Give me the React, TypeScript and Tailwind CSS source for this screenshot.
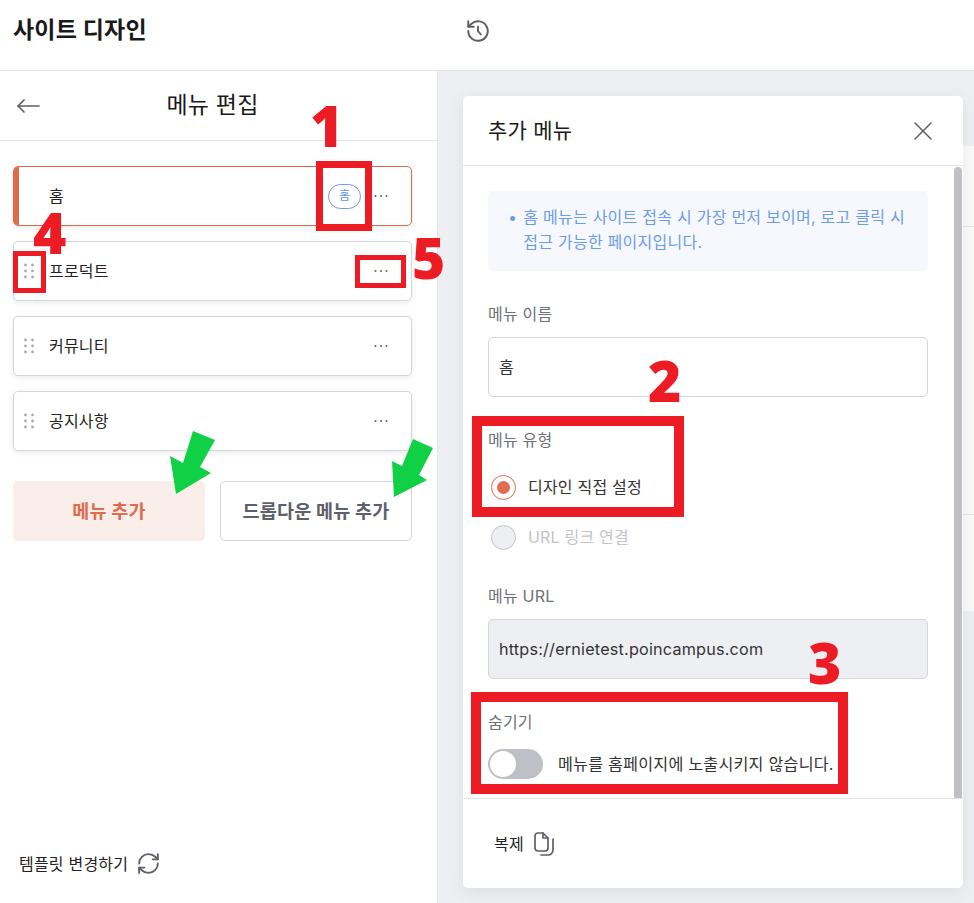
import React from 'react';
import { RefreshCw } from 'lucide-react';

function Dots() {
  return (
    <svg width="10" height="16" viewBox="0 0 10 16" fill="#a9abb3">
      <circle cx="1.5" cy="2" r="1.4" />
      <circle cx="8.5" cy="2" r="1.4" />
      <circle cx="1.5" cy="8" r="1.4" />
      <circle cx="8.5" cy="8" r="1.4" />
      <circle cx="1.5" cy="14" r="1.4" />
      <circle cx="8.5" cy="14" r="1.4" />
    </svg>
  );
}

function More() {
  return (
    <svg width="14" height="4" viewBox="0 0 14 4" fill="#5d6068">
      <circle cx="1.5" cy="2" r="1" />
      <circle cx="7" cy="2" r="1" />
      <circle cx="12.5" cy="2" r="1" />
    </svg>
  );
}

function MenuItem({ label }: { label: string }) {
  return (
    <div className="flex h-[60px] items-center rounded-[5px] border border-[#d5d6da] bg-white pr-[23px] shadow-[0_2px_6px_rgba(0,0,0,0.08)]">
      <div className="flex w-[35px] pl-[10px]">
        <Dots />
      </div>
      <span className="text-[16px] text-[#222222]">{label}</span>
      <div className="ml-auto">
        <More />
      </div>
    </div>
  );
}

// red annotation boxes and numbers sit on top of the screenshot
function Box({ className }: { className: string }) {
  return <div className={`pointer-events-none absolute border-[#ed1c24] ${className}`} />;
}

function Num({ className, children }: { className: string; children: React.ReactNode }) {
  return (
    <div className={`pointer-events-none absolute h-[44px] font-['Noto_Sans',sans-serif] text-[57px] leading-[44px] font-black tracking-normal text-[#ed1c24] ${className}`}>
      {children}
    </div>
  );
}

function GreenArrow({ className, w, h, d }: { className: string; w: number; h: number; d: string }) {
  return (
    <svg className={`pointer-events-none absolute ${className}`} width={w} height={h} viewBox={`0 0 ${w} ${h}`} fill="#10d145">
      <path d={d} />
    </svg>
  );
}

export default function App() {
  return (
    <div className="relative flex h-[903px] w-[974px] flex-col overflow-hidden bg-white font-['Inter','Noto_Sans_CJK_KR',sans-serif] tracking-[0.2px]">
      <header className="flex h-[71px] shrink-0 items-center border-b border-[#e3e4e8] pb-[10px]">
        <h1 className="w-[465px] pl-[13px] text-[23px] font-bold text-[#1a1a1a]">사이트 디자인</h1>
        <svg className="mt-[2px]" width="26" height="26" viewBox="0 0 24 24" fill="none" stroke="#5d6068" strokeWidth="1.8" strokeLinecap="round" strokeLinejoin="round">
          <path d="M3 12a9 9 0 1 0 3-6.7L3 8" />
          <path d="M3 3v5h5" />
          <path d="M12 8v4l2.5 3" />
        </svg>
      </header>

      <div className="flex min-h-0 flex-1">
        <aside className="flex w-[438px] shrink-0 flex-col border-r border-[#e3e4e8]">
          <div className="relative flex h-[70px] shrink-0 items-center justify-center border-b border-[#e3e4e8] pr-[12px]">
            <svg className="absolute top-[28px] left-[16px]" width="24" height="14" viewBox="0 0 24 14" fill="none" stroke="#5d6068" strokeWidth="1.7" strokeLinecap="round" strokeLinejoin="round">
              <path d="M23 7H2" />
              <path d="M8 1L2 7l6 6" />
            </svg>
            <h2 className="text-[23px] font-normal text-[#1a1a1a]">메뉴 편집</h2>
          </div>

          <div className="flex flex-col gap-[15px] pt-[25px] pr-[25px] pl-[13px]">
            <div className="flex h-[60px] items-center overflow-hidden rounded-[5px] border border-[#e0684b] bg-white pr-[23px] shadow-[0_2px_6px_rgba(0,0,0,0.08)]">
              <div className="h-full w-[5px] bg-[#df6c4f]" />
              <span className="ml-[30px] text-[16px] text-[#222222]">홈</span>
              <span className="mr-[13px] ml-auto flex h-[25px] w-[33px] items-center justify-center rounded-full border border-[#6d9be8] text-[12px] text-[#5b8fe6]">홈</span>
              <More />
            </div>
            <MenuItem label="프로덕트" />
            <MenuItem label="커뮤니티" />
            <MenuItem label="공지사항" />
          </div>

          <div className="flex gap-[15px] pt-[30px] pr-[25px] pl-[13px]">
            <button className="h-[60px] w-[192px] rounded-[5px] bg-[#faeeeb] pt-[2px] text-[18.5px] font-bold text-[#df6c4f]">메뉴 추가</button>
            <button className="h-[60px] w-[192px] rounded-[5px] border border-[#d5d6da] bg-white pt-[2px] text-[18.5px] font-bold text-[#5d6068]">드롭다운 메뉴 추가</button>
          </div>

          <div className="mt-auto flex items-center gap-[8px] pb-[27px] pl-[19px]">
            <span className="text-[16px] text-[#222222]">템플릿 변경하기</span>
            <RefreshCw size={25} strokeWidth={1.8} color="#5d6068" />
          </div>
        </aside>

        <main className="relative flex-1 bg-[#eeeff3] pt-[25px] pl-[25px]">
          <div className="absolute top-[75px] right-0 flex h-[465px] w-[11px] flex-col bg-[#fafafb]">
            <div className="mt-[80px] h-[289px] border-y border-[#e3e4e8]" />
          </div>

          <div className="relative flex h-[792px] w-[500px] flex-col rounded-[5px] bg-white shadow-[0_4px_16px_rgba(0,0,0,0.08)]">
            <div className="flex h-[70px] shrink-0 items-center justify-between border-b border-[#e3e4e8] pr-[31px] pl-[25px]">
              <h3 className="text-[21px] font-normal text-[#1a1a1a]">추가 메뉴</h3>
              <svg width="18" height="18" viewBox="0 0 18 18" fill="none" stroke="#5d6068" strokeWidth="1.5" strokeLinecap="round">
                <path d="M1 1l16 16" />
                <path d="M17 1L1 17" />
              </svg>
            </div>

            <div className="relative min-h-0 flex-1 overflow-hidden pt-[25px] pr-[35px] pl-[25px]">
              <div className="absolute top-[1px] right-[1px] bottom-0 w-[8px] rounded-t-full bg-[#bfc0c5]" />

              <div className="flex h-[80px] gap-[6px] rounded-[5px] bg-[#f6f8fd] py-[14px] pr-[19px] pl-[20px] text-[16px] leading-[25px] tracking-[0.25px] text-[#6d9be8]">
                <span>•</span>
                <p>홈 메뉴는 사이트 접속 시 가장 먼저 보이며, 로고 클릭 시 접근 가능한 페이지입니다.</p>
              </div>

              <label className="mt-[33px] block text-[16px] leading-[20px] text-[#6f7178]">메뉴 이름</label>
              <div className="mt-[13px] flex h-[60px] items-center rounded-[5px] border border-[#d5d6da] px-[10px] text-[16px] text-[#333333]">홈</div>

              <label className="mt-[33px] block text-[16px] leading-[20px] text-[#6f7178]">메뉴 유형</label>
              <div className="mt-[24px] flex h-[26px] items-center gap-[12px] pl-[3px] text-[16px] text-[#333333]">
                <span className="flex h-[25px] w-[25px] items-center justify-center rounded-full border border-[#df6c4f]">
                  <span className="h-[13px] w-[13px] rounded-full bg-[#df6c4f]" />
                </span>
                디자인 직접 설정
              </div>
              <div className="mt-[24px] flex h-[26px] items-center gap-[12px] pl-[3px] text-[16px] text-[#c3c4c9]">
                <span className="h-[25px] w-[25px] rounded-full border border-[#c3c4c9] bg-[#eeeff3]" />
                URL 링크 연결
              </div>

              <label className="mt-[36px] block text-[16px] leading-[20px] text-[#6f7178]">메뉴 URL</label>
              <div className="mt-[13px] flex h-[60px] items-center rounded-[5px] border border-[#d5d6da] bg-[#eeeff3] px-[10px] text-[16.2px] text-[#333333]">https://ernietest.poincampus.com</div>

              <label className="mt-[33px] block text-[16px] leading-[20px] text-[#6f7178]">숨기기</label>
              <div className="mt-[17px] flex items-center gap-[15px] text-[16.2px] whitespace-nowrap text-[#333333]">
                <span className="flex h-[30px] w-[55px] shrink-0 items-center rounded-full bg-[#bfc0c5] pl-[2px]">
                  <span className="h-[26px] w-[26px] rounded-full bg-white" />
                </span>
                메뉴를 홈페이지에 노출시키지 않습니다.
              </div>
            </div>

            <div className="flex h-[90px] shrink-0 items-center gap-[9px] border-t border-[#e3e4e8] pl-[31px] text-[16px] text-[#222222]">
              복제
              <svg width="22" height="26" viewBox="0 0 22 26" fill="none" stroke="#5d6068" strokeWidth="1.7" strokeLinecap="round" strokeLinejoin="round">
                <path d="M2 5a3 3 0 0 1 3-3h5l5 5v10a3 3 0 0 1-3 3H5a3 3 0 0 1-3-3z" />
                <path d="M10 2v5h5" />
                <path d="M20 8v11a5 5 0 0 1-5 5H8" />
              </svg>
            </div>
          </div>
        </main>
      </div>

      <Box className="top-[161px] left-[316px] h-[70px] w-[56px] border-[7px]" />
      <Box className="top-[251px] left-[13px] h-[42px] w-[33px] border-[5px]" />
      <Box className="top-[255px] left-[355px] h-[33px] w-[51px] border-[5px]" />
      <Box className="top-[416px] left-[472px] h-[101px] w-[212px] border-[10px]" />
      <Box className="top-[692px] left-[471px] h-[102px] w-[377px] border-[10px]" />

      <Num className="top-[103px] left-[310px]">1</Num>
      <Num className="top-[210px] left-[33px]">4</Num>
      <Num className="top-[235px] left-[412px]">5</Num>
      <Num className="top-[358px] left-[648px]">2</Num>
      <Num className="top-[640px] left-[808px]">3</Num>

      <GreenArrow className="top-[431px] left-[170px]" w={46} h={64} d="M23 0L45 9L30 36L41 42L6 63L0 25L13 32Z" />
      <GreenArrow className="top-[439px] left-[392px]" w={42} h={59} d="M21 0L41 9L27 36L35 41L2 58L0 22L10 27Z" />
    </div>
  );
}
